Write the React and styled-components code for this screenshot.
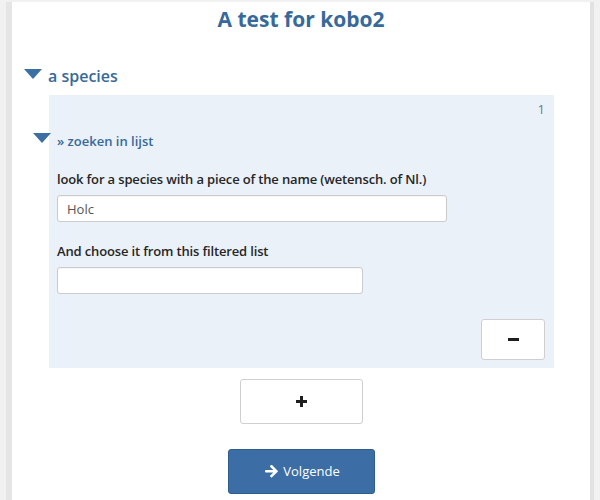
import React from "react";
import styled, { createGlobalStyle } from "styled-components";

const GlobalStyle = createGlobalStyle`
  html, body {
    margin: 0;
    padding: 0;
    background: #f1f1f1;
    font-family: "Open Sans", "Liberation Sans", sans-serif;
    color: #333;
  }
`;

const Page = styled.div`
  padding: 2px 0 0 6px;
  display: flex;
  height: 498px;
  overflow: hidden;
`;

const Sheet = styled.main`
  width: 578px;
  background: #fff;
  border-left: 6px solid #e5e5e5;
  border-right: 4px solid #e2e2e2;
  display: flex;
  flex-direction: column;
`;

const Title = styled.h1`
  margin: 1px 0 0;
  font-size: 21px;
  line-height: 32px;
  font-weight: 700;
  color: #376a9a;
  text-align: center;
`;

const Group = styled.section`
  margin-top: 29px;
  padding: 0 36px 0 36px;
`;

const Legend = styled.div`
  position: relative;
  font-weight: 600;
  color: #376a9a;
  font-size: ${(p) => (p.$small ? "13px" : "16px")};
  line-height: ${(p) => (p.$small ? "20px" : "24px")};
  margin-top: ${(p) => p.$top || 0}px;

  &::before {
    content: "";
    position: absolute;
    left: -24px;
    top: ${(p) => (p.$small ? "2px" : "5px")};
    border-left: 9.5px solid transparent;
    border-right: 9.5px solid transparent;
    border-top: 10px solid #3c6fa3;
  }
`;

const Repeat = styled.div`
  margin: 7px 0 0 1px;
  background: #ebf1f8;
  padding: 6px 9px 8px 8px;
  display: flex;
  flex-direction: column;
`;

const RepeatNumber = styled.div`
  text-align: right;
  font-size: 13px;
  line-height: 16px;
  color: #5d7d9c;
`;

const Label = styled.label`
  display: block;
  font-size: 13px;
  line-height: 20px;
  font-weight: 600;
  letter-spacing: -0.15px;
  color: #262626;
  margin-top: ${(p) => p.$top}px;
`;

const TextInput = styled.input`
  box-sizing: border-box;
  display: block;
  margin-top: 6px;
  width: ${(p) => p.$width}px;
  height: 27px;
  padding: 0 9px;
  border: 1px solid #cbcbcb;
  border-radius: 3px;
  background: #fff;
  font-family: inherit;
  font-size: 13px;
  color: #555;
  box-shadow: inset 0 1px 1px rgba(0, 0, 0, 0.04);
  outline: none;
`;

const RemoveRow = styled.div`
  display: flex;
  justify-content: flex-end;
  margin-top: 25px;
`;

const IconButton = styled.button`
  box-sizing: border-box;
  width: ${(p) => p.$width}px;
  height: ${(p) => p.$height}px;
  background: #fff;
  border: 1px solid #cfcfcf;
  border-radius: 3px;
  display: flex;
  align-items: center;
  justify-content: center;
  padding: 0;
  cursor: pointer;
`;

const Center = styled.div`
  display: flex;
  justify-content: center;
  margin-top: ${(p) => p.$top}px;
  padding-left: 1px;
`;

const NextButton = styled.button`
  box-sizing: border-box;
  width: 147px;
  height: 45px;
  background: #3c6ea5;
  border: 1px solid #305d8f;
  border-radius: 3px;
  color: #fff;
  font-family: inherit;
  font-size: 13px;
  display: flex;
  align-items: center;
  justify-content: center;
  gap: 5px;
  padding: 0 0 1px 2px;
  cursor: pointer;
`;

const Minus = () => (
  <svg width="11" height="3" viewBox="0 0 11 3">
    <rect width="11" height="3" fill="#1e1e1e" />
  </svg>
);

const Plus = () => (
  <svg width="11" height="11" viewBox="0 0 11 11">
    <rect x="4" width="3" height="11" fill="#1e1e1e" />
    <rect y="4" width="11" height="3" fill="#1e1e1e" />
  </svg>
);

const ArrowRight = () => (
  <svg width="13" height="13" viewBox="0 0 448 448">
    <path
      fill="#fff"
      d="M180 30l28-26c10-9 26-9 36 0l193 193c10 10 10 26 0 36L244 426c-10 9-26 9-36 0l-28-26c-10-10-10-26 1-36l107-102H28c-15 0-26-11-26-26v-40c0-15 11-26 26-26h260L181 66c-11-10-11-26-1-36z"
    />
  </svg>
);

export default function App() {
  return (
    <>
      <GlobalStyle />
      <Page>
        <Sheet>
          <Title>A test for kobo2</Title>
          <Group>
            <Legend>a species</Legend>
            <Repeat>
              <RepeatNumber>1</RepeatNumber>
              <Legend $small $top={14}>» zoeken in lijst</Legend>
              <Label $top={18}>look for a species with a piece of the name (wetensch. of Nl.)</Label>
              <TextInput $width={390} defaultValue="Holc" />
              <Label $top={19}>And choose it from this filtered list</Label>
              <TextInput $width={306} />
              <RemoveRow>
                <IconButton $width={64} $height={41} aria-label="remove">
                  <Minus />
                </IconButton>
              </RemoveRow>
            </Repeat>
          </Group>
          <Center $top={11}>
            <IconButton $width={123} $height={45} aria-label="add">
              <Plus />
            </IconButton>
          </Center>
          <Center $top={25}>
            <NextButton>
              <ArrowRight />
              Volgende
            </NextButton>
          </Center>
        </Sheet>
      </Page>
    </>
  );
}
